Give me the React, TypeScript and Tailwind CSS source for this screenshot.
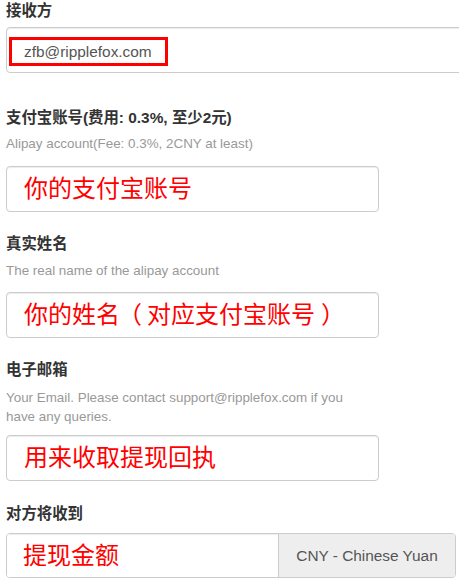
const fontStack = '"Liberation Sans", Arial, "Noto Sans CJK SC", sans-serif';

const Label: React.FC<{ text: string; className?: string }> = ({ text, className = '' }) => (
  <div className={`text-[15.4px] leading-[20px] font-bold text-[#333] ${className}`}>{text}</div>
);

const Help: React.FC<{ text: string; className?: string }> = ({ text, className = '' }) => (
  <p className={`text-[13.4px] leading-[19px] text-[#999] w-[362px] ${className}`}>{text}</p>
);

const RedInput: React.FC<{ children: React.ReactNode; className?: string }> = ({ children, className = '' }) => (
  <div
    className={`w-[373px] h-[46px] flex items-center pl-[17px] border border-[#ccc] rounded-[4px] bg-white shadow-[inset_0_1px_1px_rgba(0,0,0,0.075)] ${className}`}
  >
    <span className="text-[24px] leading-none text-[#ff0000] whitespace-nowrap">{children}</span>
  </div>
);

export default function App() {
  return (
    <div className="w-[459px] h-[584px] overflow-hidden bg-white pl-[6px]" style={{ fontFamily: fontStack }}>
      {/* 接收方 */}
      <div className="text-[15.4px] leading-[22px] font-bold text-[#333]">接收方</div>
      <div className="mt-[5px] w-[480px] h-[46px] pl-[2px] pt-[9px] border border-[#ccc] rounded-[4px] shadow-[inset_0_1px_1px_rgba(0,0,0,0.075)]">
        <span className="inline-block border-[3px] border-[#ff0000] pl-[12px] pr-[13px] h-[29px] leading-[23px] text-[15.4px] text-[#555]">
          zfb@ripplefox.com
        </span>
      </div>

      {/* 支付宝账号 */}
      <Label text="支付宝账号(费用: 0.3%, 至少2元)" className="mt-[35px]" />
      <Help text="Alipay account(Fee: 0.3%, 2CNY at least)" className="mt-[6px]" />
      <RedInput className="mt-[13px]">你的支付宝账号</RedInput>

      {/* 真实姓名 */}
      <Label text="真实姓名" className="mt-[22px]" />
      <Help text="The real name of the alipay account" className="mt-[7px]" />
      <RedInput className="mt-[12px]">
        你的姓名
        <span className="inline-block w-[27px]">
          <span className="ml-[-2px]">（</span>
        </span>
        对应支付宝账号
        <span className="inline-block w-[30px] pl-[6px]">）</span>
      </RedInput>

      {/* 电子邮箱 */}
      <Label text="电子邮箱" className="mt-[22px]" />
      <Help
        text="Your Email. Please contact support@ripplefox.com if you have any queries."
        className="mt-[8px]"
      />
      <RedInput className="mt-[9px]">用来收取提现回执</RedInput>

      {/* 对方将收到 */}
      <Label text="对方将收到" className="mt-[23px]" />
      <div className="mt-[9px] w-[450px] h-[45px] flex border border-[#ccc] rounded-[4px] overflow-hidden">
        <div className="w-[271px] flex items-center pl-[16px] bg-white shadow-[inset_0_1px_1px_rgba(0,0,0,0.075)]">
          <span className="text-[24px] leading-none text-[#ff0000]">提现金额</span>
        </div>
        <div className="flex-1 flex items-center justify-center border-l border-[#ccc] bg-[#eee] text-[15.4px] text-[#555]">
          CNY - Chinese Yuan
        </div>
      </div>
    </div>
  );
}
